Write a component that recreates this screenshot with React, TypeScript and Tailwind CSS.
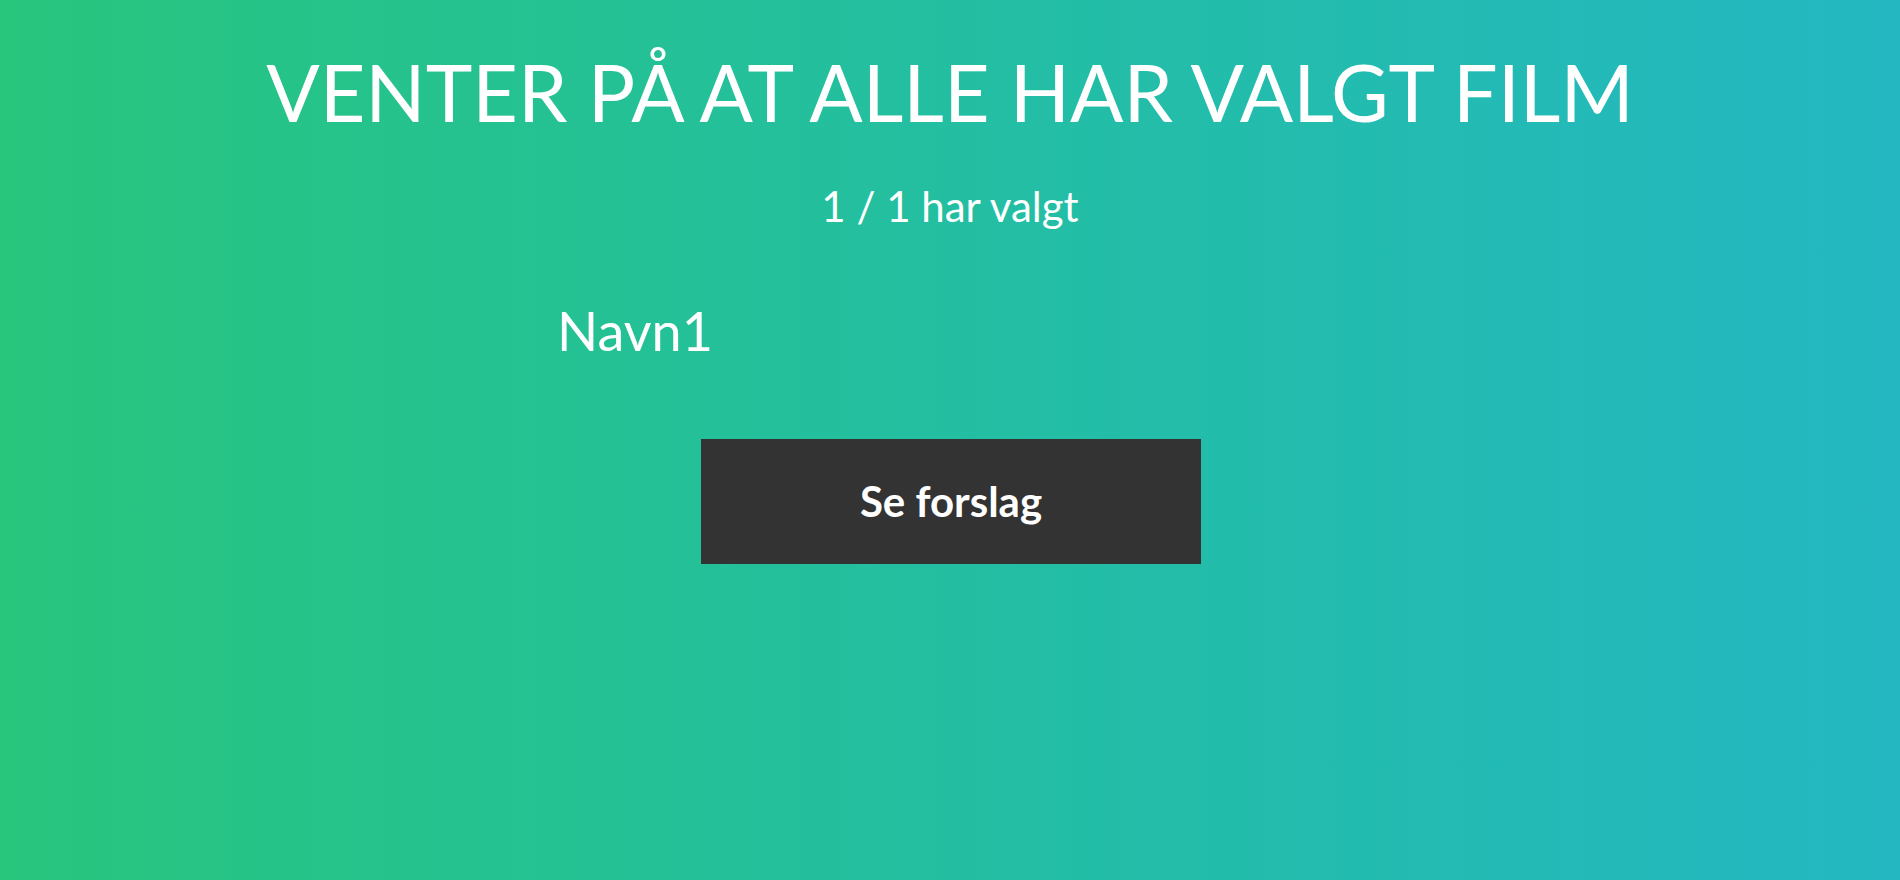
import React from "react";

const voters = ["Navn1"];

const App: React.FC = () => {
  const chosen = voters.length;
  const total = voters.length;

  return (
    <div className="min-h-[880px] w-full bg-gradient-to-r from-[#28c57d] to-[#24b7c2] font-['Lato','Open_Sans',sans-serif] text-white">
      <div className="flex flex-col items-center">
        <h1 className="mt-[52px] text-[79px] leading-none font-normal">
          VENTER PÅ AT ALLE HAR VALGT FILM
        </h1>
        <p className="mt-[54px] text-[42px] leading-none">
          {chosen} / {total} har valgt
        </p>
        <ul className="mt-[77px] w-[786px]">
          {voters.map((name) => (
            <li key={name} className="text-[54px] leading-none">
              {name}
            </li>
          ))}
        </ul>
        <button
          type="button"
          className="mt-[81px] ml-[2px] h-[125px] w-[500px] bg-[#333333] text-[42px] font-bold text-white"
        >
          Se forslag
        </button>
      </div>
    </div>
  );
};

export default App;
